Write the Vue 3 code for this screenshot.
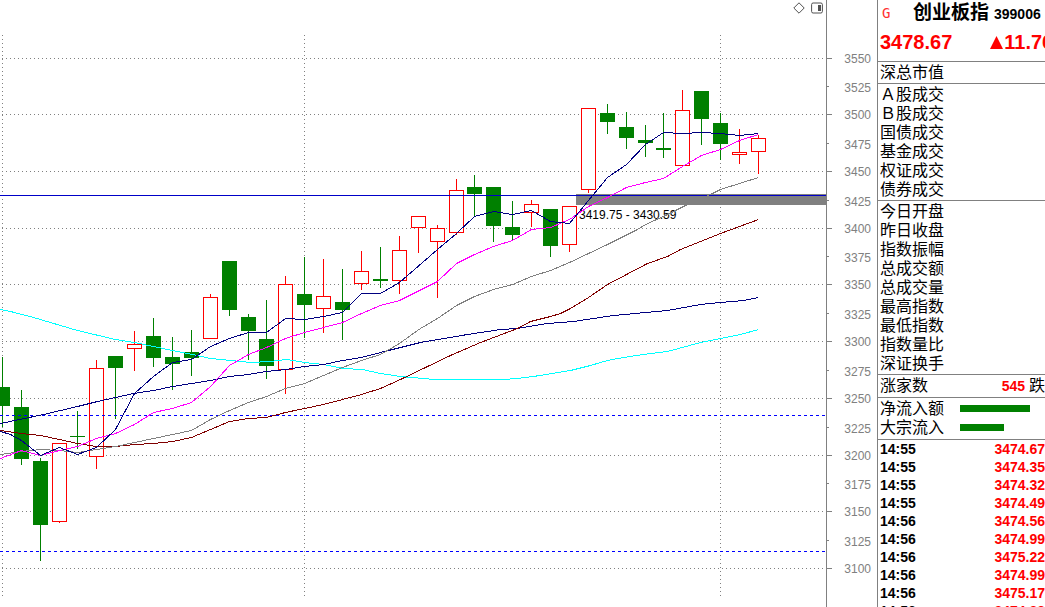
<script setup>
const gridRows = [58, 114, 171, 228, 284, 341, 398, 455, 511, 568]
const gridColumns = [2, 304, 720]
const minorTicks = [86, 143, 200, 256, 313, 370, 427, 483, 540]

const axisLabels = [
  ...gridRows.map((y, i) => ({ y: y + 5, text: 3550 - i * 50 })),
  ...minorTicks.map((y, i) => ({ y: y + 6, text: 3525 - i * 50 })),
]

// [centre x, high, body top, body bottom, low, rising]
const candles = [
  [2, 357, 387, 406, 427, 0],
  [21, 390, 407, 459, 465, 0],
  [40, 458, 461, 525, 561, 0],
  [59, 443, 443, 522, 523, 1],
  [77, 411, 436, 437, 449, 0],
  [96, 360, 368, 457, 469, 1],
  [115, 356, 356, 368, 419, 0],
  [134, 331, 344, 349, 371, 1],
  [153, 318, 336, 358, 367, 0],
  [172, 337, 357, 364, 390, 0],
  [191, 330, 352, 358, 376, 0],
  [210, 294, 297, 339, 339, 1],
  [229, 261, 261, 310, 316, 0],
  [248, 314, 317, 331, 360, 0],
  [266, 300, 339, 366, 379, 0],
  [285, 276, 284, 370, 394, 1],
  [304, 257, 294, 305, 338, 0],
  [323, 259, 296, 309, 333, 1],
  [342, 269, 302, 310, 340, 0],
  [361, 251, 271, 284, 290, 1],
  [380, 247, 279, 281, 288, 0],
  [399, 236, 250, 281, 294, 1],
  [418, 216, 216, 228, 253, 1],
  [437, 225, 228, 242, 298, 1],
  [456, 179, 190, 233, 235, 1],
  [474, 175, 187, 194, 216, 0],
  [493, 187, 187, 226, 242, 0],
  [512, 201, 227, 235, 240, 0],
  [531, 200, 204, 213, 227, 1],
  [550, 209, 209, 246, 257, 0],
  [569, 206, 206, 245, 252, 1],
  [588, 108, 108, 190, 193, 1],
  [607, 104, 113, 122, 134, 0],
  [626, 112, 127, 138, 149, 0],
  [645, 125, 140, 143, 157, 0],
  [663, 113, 148, 150, 158, 0],
  [682, 90, 110, 166, 166, 1],
  [701, 91, 91, 119, 145, 0],
  [720, 113, 123, 144, 160, 0],
  [739, 129, 152, 155, 164, 1],
  [758, 135, 138, 152, 174, 1],
].map(([x, high, top, bottom, low, up]) => ({ x, high, top, bottom, low, up }))

const averages = [
  {
    tone: 'cyan',
    points: '0,309 10,311 33,317 77,330 115,339 134,342 153,346 172,350 192,354 210,358 230,360 250,362 270,361 286,359 304,362 323,364 343,368 362,369 380,373 400,376 423,378 433,379 503,379 517,378 533,376 570,370 590,365 607,360 623,357 643,354 667,351 700,342 720,338 740,334 758,329',
  },
  {
    tone: 'navy',
    points: '0,423 43,414 77,406 97,401 115,397 133,393 153,390 172,386 210,380 229,376 248,374 266,371 285,369 304,366 323,364 342,360 361,357 380,352 400,347 420,342 467,334 500,329 517,328 547,323 573,321 613,315 667,310 700,304 720,302 743,300 758,297',
  },
  {
    tone: 'maroon',
    points: '0,430 21,433 40,435 59,439 77,443 96,446 115,446 134,444 153,443 172,441 191,437 210,429 229,421 248,418 266,417 285,412 304,408 323,404 342,399 361,394 380,388 400,379 450,355 480,342 517,328 530,321 550,316 560,313 570,308 588,297 607,284 647,263 667,256 680,249 720,233 758,219',
  },
  {
    tone: 'gray',
    points: '0,454 21,451 40,449 59,450 77,452 96,449 115,446 134,442 153,438 172,434 191,430 210,419 229,410 248,402 266,396 285,388 304,383 323,375 342,367 361,360 380,354 399,343 410,335 420,328 437,318 456,305 474,296 493,289 512,284 531,276 550,270 569,262 588,253 607,244 637,229 647,223 663,216 685,205 710,194 720,189 739,183 758,177',
  },
  {
    tone: 'magenta',
    points: '0,458 21,450 40,455 59,450 77,446 96,438 115,433 134,424 153,412 172,408 191,402 210,386 229,365 248,354 266,347 285,338 304,332 323,327 342,322 361,313 380,305 399,300 437,281 456,263 474,254 493,246 512,240 531,229 550,227 569,219 588,206 607,197 626,187 645,182 663,178 682,166 701,155 720,149 739,140 758,134',
  },
  {
    tone: 'navy',
    points: '0,431 10,434 21,440 40,455 59,447 77,454 96,447 115,429 134,393 153,376 172,362 191,359 210,346 229,338 248,332 266,332 285,318 304,319 323,316 342,312 361,293 380,293 399,282 437,249 456,233 474,216 493,211 512,214 531,210 550,221 569,223 588,200 607,177 626,164 645,144 663,132 682,133 701,132 720,133 739,135 758,133',
  },
]

const statGroups = [
  ['深总市值'],
  ['Ａ股成交', 'Ｂ股成交', '国债成交', '基金成交', '权证成交', '债券成交'],
  ['今日开盘', '昨日收盘', '指数振幅', '总成交额', '总成交量', '最高指数', '最低指数', '指数量比', '深证换手'],
]

const flows = [
  { label: '净流入额', width: 70 },
  { label: '大宗流入', width: 44 },
]

const ticks = [
  ['14:55', '3474.67'],
  ['14:55', '3474.35'],
  ['14:55', '3474.32'],
  ['14:55', '3474.49'],
  ['14:56', '3474.56'],
  ['14:56', '3474.99'],
  ['14:56', '3475.22'],
  ['14:56', '3474.99'],
  ['14:56', '3475.17'],
  ['14:56', '3474.82'],
]
</script>

<template>
  <div class="app">
    <main class="chart">
      <svg class="plot" viewBox="0 0 877 607" role="img" aria-label="创业板指 K线图">
        <g class="grid">
          <path v-for="y in gridRows" :key="'r' + y" :d="`M2 ${y + 0.5}H826`" />
          <path v-for="x in gridColumns" :key="'c' + x" :d="`M${x + 0.5} 35V597`" />
        </g>

        <rect class="band" x="576" y="194" width="250" height="11" />

        <g v-for="c in candles" :key="c.x" :class="c.up ? 'up' : 'down'">
          <rect class="wick" :x="c.x" :y="c.high" width="1" :height="c.low - c.high" />
          <rect v-if="c.up" class="body" :x="c.x - 6.5" :y="c.top + 0.5" width="14" :height="c.bottom - c.top - 1" />
          <rect v-else class="body" :x="c.x - 7" :y="c.top" width="15" :height="c.bottom - c.top" />
        </g>

        <path class="level" d="M0 195.5H826" />
        <path class="level dashed" d="M0 415.5H826M0 551.5H826" />
        <text class="range" x="579" y="219">3419.75 - 3430.59</text>

        <g transform="translate(0.5 0.5)">
          <polyline v-for="(line, i) in averages" :key="i" :class="['average', line.tone]" :points="line.points" />
        </g>

        <g class="axis">
          <path d="M826.5 0V607" />
          <path v-for="y in gridRows" :key="'a' + y" :d="`M826 ${y + 0.5}H832`" />
          <path v-for="y in minorTicks" :key="'m' + y" :d="`M826 ${y + 0.5}H829`" />
        </g>
        <text v-for="label in axisLabels" :key="label.text" class="label" x="871" :y="label.y">{{ label.text }}</text>
      </svg>

      <div class="tools">
        <button type="button" aria-label="标记">
          <svg width="12" height="12" viewBox="0 0 12 12"><path d="M6 .8 11.2 6 6 11.2.8 6Z" /></svg>
        </button>
        <button type="button" aria-label="侧栏">
          <svg width="12" height="12" viewBox="0 0 12 12">
            <rect x=".6" y="1" width="10.8" height="10" rx="1.5" />
            <rect class="fill" x="7" y="3" width="3" height="6" />
          </svg>
        </button>
      </div>
    </main>

    <aside class="panel">
      <header class="head">
        <div class="title">
          <span class="mark">G</span>
          <h1>创业板指</h1>
          <span class="code">399006</span>
        </div>
        <div class="quote">
          <span>3478.67</span>
          <span class="change"><svg width="13" height="13" viewBox="0 0 13 13"><path d="M6.5 0 13 13H0Z" /></svg>11.76</span>
        </div>
      </header>

      <ul v-for="(group, i) in statGroups" :key="i" class="group">
        <li v-for="name in group" :key="name">{{ name }}</li>
      </ul>

      <div class="breadth">
        <span>涨家数</span>
        <b>545</b>
        <span>跌</span>
      </div>

      <ul class="group flows">
        <li v-for="flow in flows" :key="flow.label">
          <span>{{ flow.label }}</span>
          <i :style="{ width: flow.width + 'px' }"></i>
        </li>
      </ul>

      <table class="ticks">
        <tbody>
          <tr v-for="(tick, i) in ticks" :key="i">
            <td>{{ tick[0] }}</td>
            <td class="price">{{ tick[1] }}</td>
          </tr>
        </tbody>
      </table>
    </aside>
  </div>
</template>

<style>
html,
body {
  background: #fff;
}
</style>

<style scoped>
.app {
  display: grid;
  grid-template-columns: minmax(0, 1fr) 168px;
  height: 100vh;
  overflow: hidden;
  background: #fff;
  color: #000;
  font-family: "Liberation Sans", "Noto Sans CJK SC", sans-serif;
}

.chart {
  position: relative;
}

.plot {
  display: block;
  width: 100%;
  height: auto;
}

.plot path,
.plot rect,
.plot polyline {
  shape-rendering: crispEdges;
}

.grid path {
  stroke: #808080;
  stroke-dasharray: 1 3;
}

.axis path {
  stroke: #808080;
}

.label {
  fill: #808080;
  font-size: 12px;
  text-anchor: end;
}

.band {
  fill: #808080;
}

.range {
  font-size: 12px;
}

.up .wick {
  fill: #f00;
}

.up .body {
  fill: #fff;
  stroke: #f00;
}

.down {
  fill: #008000;
}

.level {
  stroke: #0000c8;
}

.dashed {
  stroke: #00f;
  stroke-dasharray: 3 3;
}

.average {
  fill: none;
}

.cyan {
  stroke: #0ff;
}

.navy {
  stroke: #000080;
}

.maroon {
  stroke: #800000;
}

.gray {
  stroke: #808080;
}

.magenta {
  stroke: #f0f;
}

.tools {
  position: absolute;
  top: 2px;
  right: 54px;
  display: flex;
  gap: 6px;
}

.tools button {
  padding: 0;
  border: 0;
  background: none;
}

.tools svg {
  display: block;
  fill: none;
  stroke: #505050;
}

.tools .fill {
  fill: #505050;
  stroke: none;
}

.panel {
  box-sizing: border-box;
  overflow: hidden;
  border-left: 1px solid #808080;
  white-space: nowrap;
  font-size: 16px;
}

.head {
  box-sizing: border-box;
  height: 62px;
  border-bottom: 1px solid #808080;
}

.title {
  display: flex;
  align-items: center;
  height: 26px;
  padding-left: 4px;
}

.mark {
  width: 31px;
  color: #ff3030;
  font: 14px "DejaVu Sans Mono", monospace;
}

h1 {
  margin: 0;
  font-size: 19px;
  line-height: 24px;
  font-weight: 700;
}

.code {
  padding: 2px 0 0 5px;
  font-size: 14px;
  font-weight: 700;
}

.quote {
  display: flex;
  gap: 38px;
  padding-left: 2px;
  color: #f00;
  font-size: 20px;
  line-height: 32px;
  font-weight: 700;
}

.change {
  display: flex;
  align-items: center;
  gap: 1px;
}

.change svg {
  fill: #f00;
}

.group {
  margin: 0;
  padding: 1px 2px;
  border-bottom: 1px solid #808080;
  list-style: none;
  line-height: 19px;
}

.breadth {
  display: flex;
  align-items: center;
  padding-left: 2px;
  border-bottom: 1px solid #808080;
  line-height: 22px;
}

.breadth b {
  margin: 0 4px 0 auto;
  color: #f00;
  font-size: 14px;
}

.flows {
  padding-bottom: 2px;
}

.flows li {
  display: flex;
  align-items: center;
  gap: 16px;
}

.flows i {
  height: 7px;
  background: #008000;
}

.ticks {
  width: 100%;
  border-collapse: collapse;
  font-size: 14px;
  line-height: 18px;
  font-weight: 700;
}

.ticks td {
  padding: 0 0 0 2px;
}

.ticks .price {
  padding: 0;
  color: #f00;
  text-align: right;
}
</style>
